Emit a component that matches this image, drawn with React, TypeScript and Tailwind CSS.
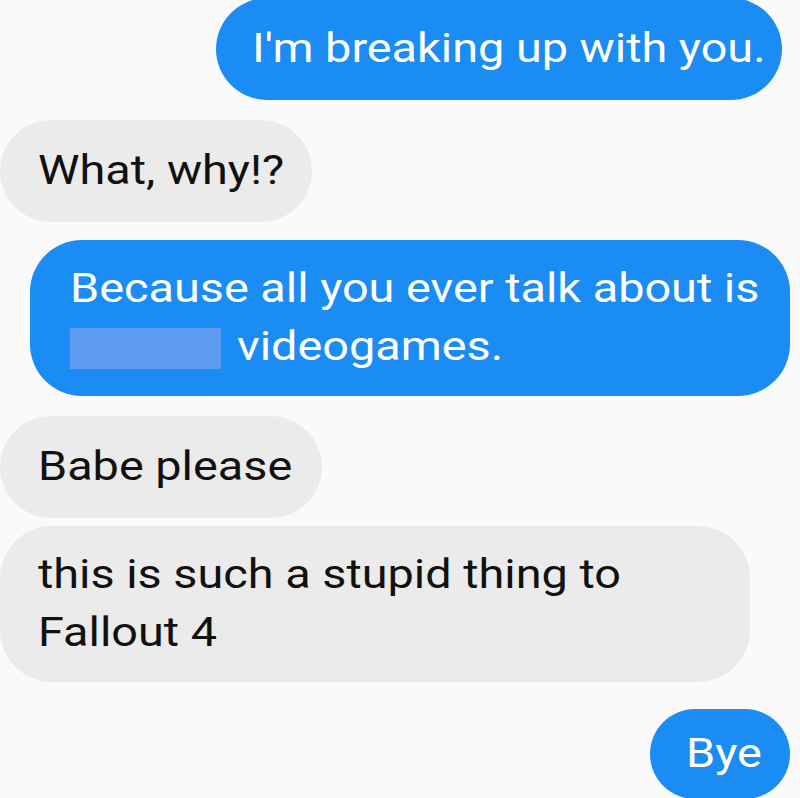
import React from "react";

const font = { fontFamily: "Roboto, 'Noto Sans', sans-serif" };

function T({ children }: { children: React.ReactNode }) {
  return <span className="inline-block origin-left scale-x-[1.17] whitespace-nowrap">{children}</span>;
}

export default function App() {
  return (
    <div
      className="w-[800px] h-[798px] bg-[#fafafa] overflow-hidden flex flex-col text-[40px] leading-[58px]"
      style={font}
    >
      <div className="self-end mr-[18px] mt-[-2px] w-[566px] bg-[#1a8cf3] text-white rounded-[52px] pl-[36px] pt-[22px] pb-[22px]">
        <T>I'm breaking up with you.</T>
      </div>
      <div className="self-start mt-[20px] w-[312px] bg-[#ebebeb] text-[#111] rounded-[52px] pl-[38px] pt-[22px] pb-[22px]">
        <T>What, why!?</T>
      </div>
      <div className="self-end mr-[10px] mt-[18px] w-[760px] bg-[#1a8cf3] text-white rounded-[52px] pl-[40px] pt-[20px] pb-[20px]">
        <div>
          <T>Because all you ever talk about is</T>
        </div>
        <div className="flex items-center">
          <span className="inline-block w-[151px] h-[41px] bg-[#5e9cf2] mr-[16px] mt-[2px]" />
          <T>videogames.</T>
        </div>
      </div>
      <div className="self-start mt-[20px] w-[322px] bg-[#ebebeb] text-[#111] rounded-[52px] pl-[38px] pt-[22px] pb-[22px]">
        <T>Babe please</T>
      </div>
      <div className="self-start mt-[8px] w-[750px] bg-[#ebebeb] text-[#111] rounded-[52px] pl-[38px] pt-[20px] pb-[20px]">
        <div>
          <T>this is such a stupid thing to</T>
        </div>
        <div>
          <T>Fallout 4</T>
        </div>
      </div>
      <div className="self-end mr-[10px] mt-[27px] w-[140px] bg-[#1a8cf3] text-white rounded-[50px] pl-[36px] pt-[16px] pb-[16px]">
        <T>Bye</T>
      </div>
    </div>
  );
}
